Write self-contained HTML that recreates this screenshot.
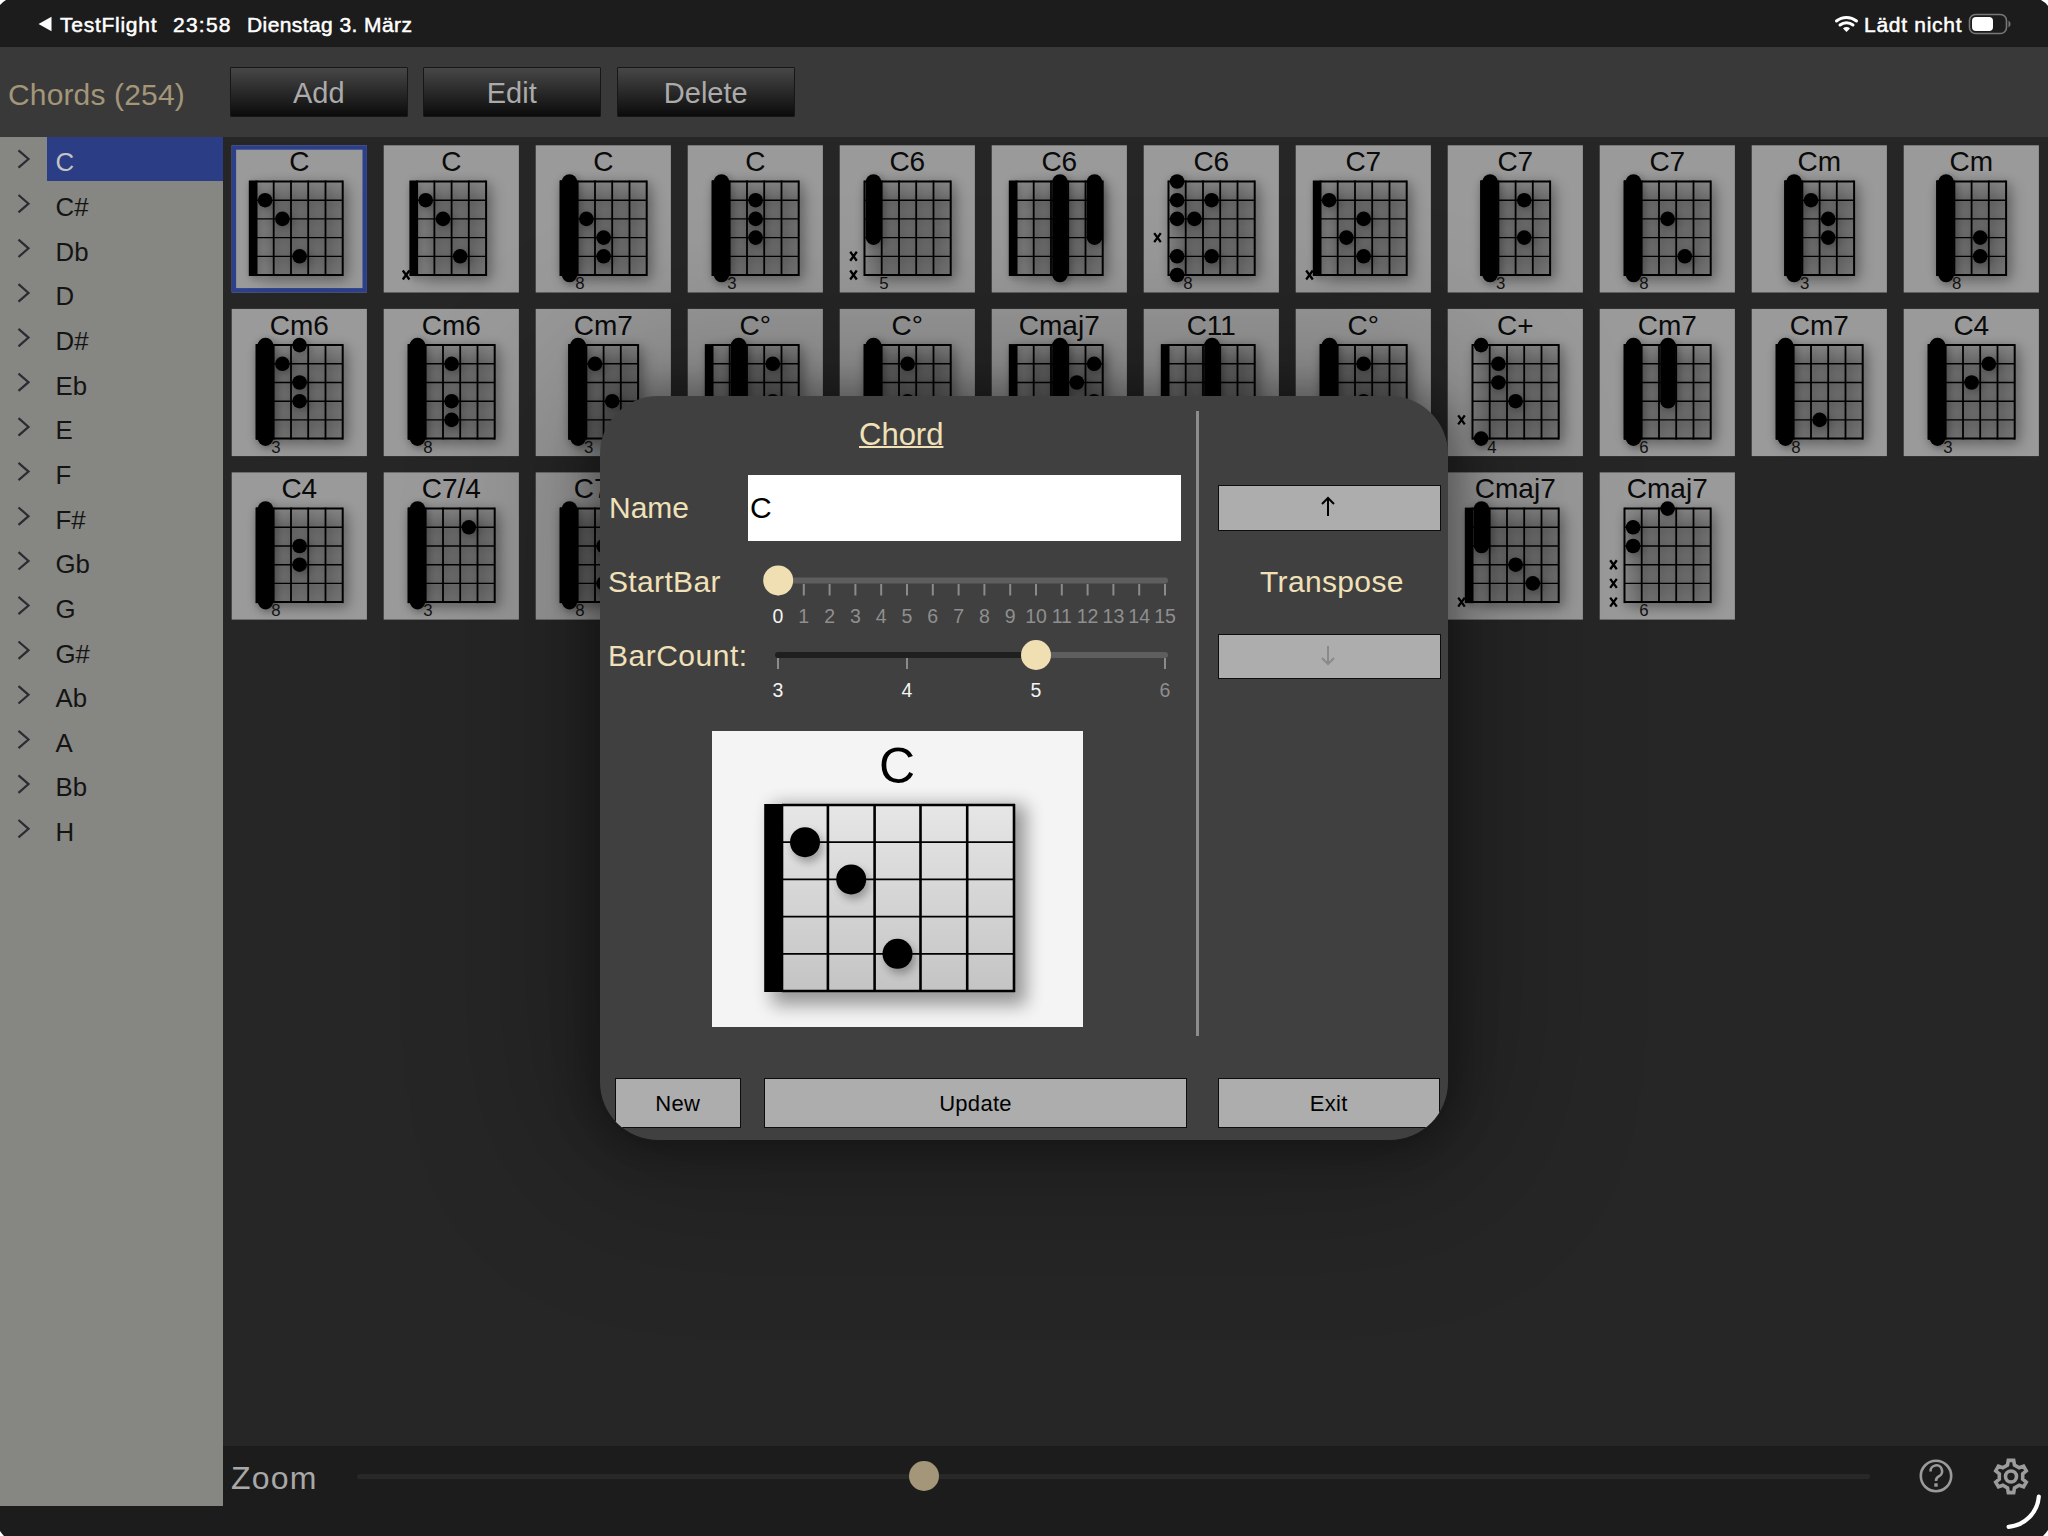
<!DOCTYPE html>
<html><head><meta charset="utf-8">
<style>
html,body{margin:0;padding:0;}
body{width:2048px;height:1536px;position:relative;overflow:hidden;background:#1c1c1c;font-family:"Liberation Sans",sans-serif;}
.a{position:absolute;}
.ct{font-size:28px;text-anchor:middle;fill:#0a0a0a;font-family:"Liberation Sans",sans-serif;}
.cf{font-size:16.8px;text-anchor:middle;fill:#111;font-family:"Liberation Sans",sans-serif;}
.cx{font-size:13px;font-weight:bold;text-anchor:middle;fill:#000;font-family:"Liberation Sans",sans-serif;}
.sn{font-size:25.8px;font-family:"Liberation Sans",sans-serif;}
.tb{position:absolute;top:66.7px;height:50.5px;width:177.5px;box-sizing:border-box;border:1px solid #171717;border-radius:1px;
  background:linear-gradient(#474747,#0b0b0b);color:#ababab;font-size:29px;line-height:50px;text-align:center;}
.lab{position:absolute;color:#f0e1b9;font-size:30px;line-height:1;white-space:nowrap;}
.btn{position:absolute;box-sizing:border-box;border:1.6px solid #0d0d0d;background:#adadad;color:#000;font-size:22px;text-align:center;}
</style></head>
<body>
<!-- status bar -->
<div class="a" style="left:0;top:0;width:2048px;height:47px;background:#1c1c1c;"></div>
<!-- toolbar -->
<div class="a" style="left:0;top:47px;width:2048px;height:90px;background:#393939;"></div>
<!-- content bg -->
<div class="a" style="left:223px;top:137px;width:1825px;height:1309px;background:#262626;"></div>
<!-- sidebar -->
<div class="a" style="left:0;top:137px;width:223px;height:1369px;background:#868682;"></div>
<div class="a" style="left:47.3px;top:136.5px;width:175.7px;height:44.9px;background:#2a3d85;"></div>
<!-- bottom bar -->
<div class="a" style="left:223px;top:1446px;width:1825px;height:60px;background:#1c1c1c;"></div>

<svg class="a" style="left:0;top:0" width="2048" height="1536" viewBox="0 0 2048 1536">
<defs>
<filter id="rsh" x="-40%" y="-40%" width="180%" height="180%"><feGaussianBlur stdDeviation="8"/></filter>
<filter id="gsh" x="-40%" y="-40%" width="180%" height="180%"><feGaussianBlur in="SourceAlpha" stdDeviation="4"/><feOffset dx="2" dy="2"/><feComponentTransfer><feFuncA type="linear" slope="0.35"/></feComponentTransfer><feMerge><feMergeNode/><feMergeNode in="SourceGraphic"/></feMerge></filter>
</defs>
<path d="M18.5 150.3 L28.5 159 L18.5 167.7" fill="none" stroke="#2b2b33" stroke-width="2.2" stroke-linejoin="miter"/>
<text x="55.5" y="171.3" class="sn" fill="#c4c4c4">C</text>
<path d="M18.5 195 L28.5 203.7 L18.5 212.4" fill="none" stroke="#2b2b33" stroke-width="2.2" stroke-linejoin="miter"/>
<text x="55.5" y="216" class="sn" fill="#141414">C#</text>
<path d="M18.5 239.6 L28.5 248.3 L18.5 257" fill="none" stroke="#2b2b33" stroke-width="2.2" stroke-linejoin="miter"/>
<text x="55.5" y="260.6" class="sn" fill="#141414">Db</text>
<path d="M18.5 284.2 L28.5 292.9 L18.5 301.6" fill="none" stroke="#2b2b33" stroke-width="2.2" stroke-linejoin="miter"/>
<text x="55.5" y="305.2" class="sn" fill="#141414">D</text>
<path d="M18.5 328.9 L28.5 337.6 L18.5 346.3" fill="none" stroke="#2b2b33" stroke-width="2.2" stroke-linejoin="miter"/>
<text x="55.5" y="349.9" class="sn" fill="#141414">D#</text>
<path d="M18.5 373.6 L28.5 382.2 L18.5 390.9" fill="none" stroke="#2b2b33" stroke-width="2.2" stroke-linejoin="miter"/>
<text x="55.5" y="394.6" class="sn" fill="#141414">Eb</text>
<path d="M18.5 418.2 L28.5 426.9 L18.5 435.6" fill="none" stroke="#2b2b33" stroke-width="2.2" stroke-linejoin="miter"/>
<text x="55.5" y="439.2" class="sn" fill="#141414">E</text>
<path d="M18.5 462.9 L28.5 471.6 L18.5 480.2" fill="none" stroke="#2b2b33" stroke-width="2.2" stroke-linejoin="miter"/>
<text x="55.5" y="483.9" class="sn" fill="#141414">F</text>
<path d="M18.5 507.5 L28.5 516.2 L18.5 524.9" fill="none" stroke="#2b2b33" stroke-width="2.2" stroke-linejoin="miter"/>
<text x="55.5" y="528.5" class="sn" fill="#141414">F#</text>
<path d="M18.5 552.1 L28.5 560.9 L18.5 569.5" fill="none" stroke="#2b2b33" stroke-width="2.2" stroke-linejoin="miter"/>
<text x="55.5" y="573.1" class="sn" fill="#141414">Gb</text>
<path d="M18.5 596.8 L28.5 605.5 L18.5 614.2" fill="none" stroke="#2b2b33" stroke-width="2.2" stroke-linejoin="miter"/>
<text x="55.5" y="617.8" class="sn" fill="#141414">G</text>
<path d="M18.5 641.5 L28.5 650.2 L18.5 658.9" fill="none" stroke="#2b2b33" stroke-width="2.2" stroke-linejoin="miter"/>
<text x="55.5" y="662.5" class="sn" fill="#141414">G#</text>
<path d="M18.5 686.1 L28.5 694.8 L18.5 703.5" fill="none" stroke="#2b2b33" stroke-width="2.2" stroke-linejoin="miter"/>
<text x="55.5" y="707.1" class="sn" fill="#141414">Ab</text>
<path d="M18.5 730.8 L28.5 739.5 L18.5 748.1" fill="none" stroke="#2b2b33" stroke-width="2.2" stroke-linejoin="miter"/>
<text x="55.5" y="751.8" class="sn" fill="#141414">A</text>
<path d="M18.5 775.4 L28.5 784.1 L18.5 792.8" fill="none" stroke="#2b2b33" stroke-width="2.2" stroke-linejoin="miter"/>
<text x="55.5" y="796.4" class="sn" fill="#141414">Bb</text>
<path d="M18.5 820 L28.5 828.8 L18.5 837.4" fill="none" stroke="#2b2b33" stroke-width="2.2" stroke-linejoin="miter"/>
<text x="55.5" y="841" class="sn" fill="#141414">H</text>
<g transform="translate(231.7,145.3)"><rect width="135.2" height="147.2" fill="#9a9a9a"/><rect x="2.2" y="2.2" width="130.8" height="142.8" fill="none" stroke="#2c3f8b" stroke-width="4.4"/><rect x="29.8" y="41.2" width="86.2" height="93.5" fill="#000" opacity="0.3" filter="url(#rsh)"/><text x="67.6" y="25.7" class="ct">C</text><g filter="url(#gsh)"><line x1="24.8" y1="36.2" x2="111" y2="36.2" stroke="#000" stroke-width="2"/><line x1="24.8" y1="54.9" x2="111" y2="54.9" stroke="#000" stroke-width="1.35"/><line x1="24.8" y1="73.6" x2="111" y2="73.6" stroke="#000" stroke-width="1.35"/><line x1="24.8" y1="92.3" x2="111" y2="92.3" stroke="#000" stroke-width="1.35"/><line x1="24.8" y1="111" x2="111" y2="111" stroke="#000" stroke-width="1.35"/><line x1="24.8" y1="129.7" x2="111" y2="129.7" stroke="#000" stroke-width="2"/><line x1="24.8" y1="35.2" x2="24.8" y2="130.7" stroke="#000" stroke-width="2"/><line x1="42" y1="35.2" x2="42" y2="130.7" stroke="#000" stroke-width="1.8"/><line x1="59.3" y1="35.2" x2="59.3" y2="130.7" stroke="#000" stroke-width="1.8"/><line x1="76.5" y1="35.2" x2="76.5" y2="130.7" stroke="#000" stroke-width="1.8"/><line x1="93.8" y1="35.2" x2="93.8" y2="130.7" stroke="#000" stroke-width="1.8"/><line x1="111" y1="35.2" x2="111" y2="130.7" stroke="#000" stroke-width="2"/><rect x="17.1" y="35.2" width="7.7" height="95.5" fill="#000"/><circle cx="33.4" cy="54.9" r="7.3" fill="#000"/><circle cx="50.7" cy="73.6" r="7.3" fill="#000"/><circle cx="67.9" cy="111" r="7.3" fill="#000"/></g></g>
<g transform="translate(383.7,145.3)"><rect width="135.2" height="147.2" fill="#9a9a9a"/><rect x="38.4" y="41.2" width="69" height="93.5" fill="#000" opacity="0.3" filter="url(#rsh)"/><text x="67.6" y="25.7" class="ct">C</text><g filter="url(#gsh)"><line x1="33.4" y1="36.2" x2="102.4" y2="36.2" stroke="#000" stroke-width="2"/><line x1="33.4" y1="54.9" x2="102.4" y2="54.9" stroke="#000" stroke-width="1.35"/><line x1="33.4" y1="73.6" x2="102.4" y2="73.6" stroke="#000" stroke-width="1.35"/><line x1="33.4" y1="92.3" x2="102.4" y2="92.3" stroke="#000" stroke-width="1.35"/><line x1="33.4" y1="111" x2="102.4" y2="111" stroke="#000" stroke-width="1.35"/><line x1="33.4" y1="129.7" x2="102.4" y2="129.7" stroke="#000" stroke-width="2"/><line x1="33.4" y1="35.2" x2="33.4" y2="130.7" stroke="#000" stroke-width="2"/><line x1="50.7" y1="35.2" x2="50.7" y2="130.7" stroke="#000" stroke-width="1.8"/><line x1="67.9" y1="35.2" x2="67.9" y2="130.7" stroke="#000" stroke-width="1.8"/><line x1="85.1" y1="35.2" x2="85.1" y2="130.7" stroke="#000" stroke-width="1.8"/><line x1="102.4" y1="35.2" x2="102.4" y2="130.7" stroke="#000" stroke-width="2"/><rect x="25.7" y="35.2" width="7.7" height="95.5" fill="#000"/><circle cx="42" cy="54.9" r="7.3" fill="#000"/><circle cx="59.3" cy="73.6" r="7.3" fill="#000"/><circle cx="76.5" cy="111" r="7.3" fill="#000"/></g><path d="M19.1 125.2 L25.7 134.2 M25.7 125.2 L19.1 134.2" stroke="#000" stroke-width="2.3"/></g>
<g transform="translate(535.7,145.3)"><rect width="135.2" height="147.2" fill="#9a9a9a"/><rect x="29.8" y="41.2" width="86.2" height="93.5" fill="#000" opacity="0.3" filter="url(#rsh)"/><text x="67.6" y="25.7" class="ct">C</text><g filter="url(#gsh)"><line x1="24.8" y1="36.2" x2="111" y2="36.2" stroke="#000" stroke-width="2"/><line x1="24.8" y1="54.9" x2="111" y2="54.9" stroke="#000" stroke-width="1.35"/><line x1="24.8" y1="73.6" x2="111" y2="73.6" stroke="#000" stroke-width="1.35"/><line x1="24.8" y1="92.3" x2="111" y2="92.3" stroke="#000" stroke-width="1.35"/><line x1="24.8" y1="111" x2="111" y2="111" stroke="#000" stroke-width="1.35"/><line x1="24.8" y1="129.7" x2="111" y2="129.7" stroke="#000" stroke-width="2"/><line x1="24.8" y1="35.2" x2="24.8" y2="130.7" stroke="#000" stroke-width="2"/><line x1="42" y1="35.2" x2="42" y2="130.7" stroke="#000" stroke-width="1.8"/><line x1="59.3" y1="35.2" x2="59.3" y2="130.7" stroke="#000" stroke-width="1.8"/><line x1="76.5" y1="35.2" x2="76.5" y2="130.7" stroke="#000" stroke-width="1.8"/><line x1="93.8" y1="35.2" x2="93.8" y2="130.7" stroke="#000" stroke-width="1.8"/><line x1="111" y1="35.2" x2="111" y2="130.7" stroke="#000" stroke-width="2"/><rect x="24.3" y="35.2" width="7" height="95.5" fill="#000"/><rect x="26" y="28.9" width="15.6" height="108.1" rx="7.8" fill="#000"/><circle cx="50.7" cy="73.6" r="7.3" fill="#000"/><circle cx="67.9" cy="92.3" r="7.3" fill="#000"/><circle cx="67.9" cy="111" r="7.3" fill="#000"/></g><text x="44.3" y="143.8" class="cf">8</text></g>
<g transform="translate(687.7,145.3)"><rect width="135.2" height="147.2" fill="#9a9a9a"/><rect x="29.8" y="41.2" width="86.2" height="93.5" fill="#000" opacity="0.3" filter="url(#rsh)"/><text x="67.6" y="25.7" class="ct">C</text><g filter="url(#gsh)"><line x1="24.8" y1="36.2" x2="111" y2="36.2" stroke="#000" stroke-width="2"/><line x1="24.8" y1="54.9" x2="111" y2="54.9" stroke="#000" stroke-width="1.35"/><line x1="24.8" y1="73.6" x2="111" y2="73.6" stroke="#000" stroke-width="1.35"/><line x1="24.8" y1="92.3" x2="111" y2="92.3" stroke="#000" stroke-width="1.35"/><line x1="24.8" y1="111" x2="111" y2="111" stroke="#000" stroke-width="1.35"/><line x1="24.8" y1="129.7" x2="111" y2="129.7" stroke="#000" stroke-width="2"/><line x1="24.8" y1="35.2" x2="24.8" y2="130.7" stroke="#000" stroke-width="2"/><line x1="42" y1="35.2" x2="42" y2="130.7" stroke="#000" stroke-width="1.8"/><line x1="59.3" y1="35.2" x2="59.3" y2="130.7" stroke="#000" stroke-width="1.8"/><line x1="76.5" y1="35.2" x2="76.5" y2="130.7" stroke="#000" stroke-width="1.8"/><line x1="93.8" y1="35.2" x2="93.8" y2="130.7" stroke="#000" stroke-width="1.8"/><line x1="111" y1="35.2" x2="111" y2="130.7" stroke="#000" stroke-width="2"/><rect x="24.3" y="35.2" width="7" height="95.5" fill="#000"/><rect x="26" y="28.9" width="15.6" height="108.1" rx="7.8" fill="#000"/><circle cx="67.9" cy="54.9" r="7.3" fill="#000"/><circle cx="67.9" cy="73.6" r="7.3" fill="#000"/><circle cx="67.9" cy="92.3" r="7.3" fill="#000"/></g><text x="44.3" y="143.8" class="cf">3</text></g>
<g transform="translate(839.7,145.3)"><rect width="135.2" height="147.2" fill="#9a9a9a"/><rect x="29.8" y="41.2" width="86.2" height="93.5" fill="#000" opacity="0.3" filter="url(#rsh)"/><text x="67.6" y="25.7" class="ct">C6</text><g filter="url(#gsh)"><line x1="24.8" y1="36.2" x2="111" y2="36.2" stroke="#000" stroke-width="2"/><line x1="24.8" y1="54.9" x2="111" y2="54.9" stroke="#000" stroke-width="1.35"/><line x1="24.8" y1="73.6" x2="111" y2="73.6" stroke="#000" stroke-width="1.35"/><line x1="24.8" y1="92.3" x2="111" y2="92.3" stroke="#000" stroke-width="1.35"/><line x1="24.8" y1="111" x2="111" y2="111" stroke="#000" stroke-width="1.35"/><line x1="24.8" y1="129.7" x2="111" y2="129.7" stroke="#000" stroke-width="2"/><line x1="24.8" y1="35.2" x2="24.8" y2="130.7" stroke="#000" stroke-width="2"/><line x1="42" y1="35.2" x2="42" y2="130.7" stroke="#000" stroke-width="1.8"/><line x1="59.3" y1="35.2" x2="59.3" y2="130.7" stroke="#000" stroke-width="1.8"/><line x1="76.5" y1="35.2" x2="76.5" y2="130.7" stroke="#000" stroke-width="1.8"/><line x1="93.8" y1="35.2" x2="93.8" y2="130.7" stroke="#000" stroke-width="1.8"/><line x1="111" y1="35.2" x2="111" y2="130.7" stroke="#000" stroke-width="2"/><rect x="26" y="28.9" width="15.6" height="70.7" rx="7.8" fill="#000"/></g><path d="M10.5 106.5 L17.1 115.5 M17.1 106.5 L10.5 115.5" stroke="#000" stroke-width="2.3"/><path d="M10.5 125.2 L17.1 134.2 M17.1 125.2 L10.5 134.2" stroke="#000" stroke-width="2.3"/><text x="44.3" y="143.8" class="cf">5</text></g>
<g transform="translate(991.7,145.3)"><rect width="135.2" height="147.2" fill="#9a9a9a"/><rect x="29.8" y="41.2" width="86.2" height="93.5" fill="#000" opacity="0.3" filter="url(#rsh)"/><text x="67.6" y="25.7" class="ct">C6</text><g filter="url(#gsh)"><line x1="24.8" y1="36.2" x2="111" y2="36.2" stroke="#000" stroke-width="2"/><line x1="24.8" y1="54.9" x2="111" y2="54.9" stroke="#000" stroke-width="1.35"/><line x1="24.8" y1="73.6" x2="111" y2="73.6" stroke="#000" stroke-width="1.35"/><line x1="24.8" y1="92.3" x2="111" y2="92.3" stroke="#000" stroke-width="1.35"/><line x1="24.8" y1="111" x2="111" y2="111" stroke="#000" stroke-width="1.35"/><line x1="24.8" y1="129.7" x2="111" y2="129.7" stroke="#000" stroke-width="2"/><line x1="24.8" y1="35.2" x2="24.8" y2="130.7" stroke="#000" stroke-width="2"/><line x1="42" y1="35.2" x2="42" y2="130.7" stroke="#000" stroke-width="1.8"/><line x1="59.3" y1="35.2" x2="59.3" y2="130.7" stroke="#000" stroke-width="1.8"/><line x1="76.5" y1="35.2" x2="76.5" y2="130.7" stroke="#000" stroke-width="1.8"/><line x1="93.8" y1="35.2" x2="93.8" y2="130.7" stroke="#000" stroke-width="1.8"/><line x1="111" y1="35.2" x2="111" y2="130.7" stroke="#000" stroke-width="2"/><rect x="17.1" y="35.2" width="7.7" height="95.5" fill="#000"/><rect x="60.5" y="28.9" width="15.6" height="108.1" rx="7.8" fill="#000"/><rect x="95" y="28.9" width="15.6" height="70.7" rx="7.8" fill="#000"/></g></g>
<g transform="translate(1143.7,145.3)"><rect width="135.2" height="147.2" fill="#9a9a9a"/><rect x="29.8" y="41.2" width="86.2" height="93.5" fill="#000" opacity="0.3" filter="url(#rsh)"/><text x="67.6" y="25.7" class="ct">C6</text><g filter="url(#gsh)"><line x1="24.8" y1="36.2" x2="111" y2="36.2" stroke="#000" stroke-width="2"/><line x1="24.8" y1="54.9" x2="111" y2="54.9" stroke="#000" stroke-width="1.35"/><line x1="24.8" y1="73.6" x2="111" y2="73.6" stroke="#000" stroke-width="1.35"/><line x1="24.8" y1="92.3" x2="111" y2="92.3" stroke="#000" stroke-width="1.35"/><line x1="24.8" y1="111" x2="111" y2="111" stroke="#000" stroke-width="1.35"/><line x1="24.8" y1="129.7" x2="111" y2="129.7" stroke="#000" stroke-width="2"/><line x1="24.8" y1="35.2" x2="24.8" y2="130.7" stroke="#000" stroke-width="2"/><line x1="42" y1="35.2" x2="42" y2="130.7" stroke="#000" stroke-width="1.8"/><line x1="59.3" y1="35.2" x2="59.3" y2="130.7" stroke="#000" stroke-width="1.8"/><line x1="76.5" y1="35.2" x2="76.5" y2="130.7" stroke="#000" stroke-width="1.8"/><line x1="93.8" y1="35.2" x2="93.8" y2="130.7" stroke="#000" stroke-width="1.8"/><line x1="111" y1="35.2" x2="111" y2="130.7" stroke="#000" stroke-width="2"/><circle cx="33.4" cy="36.2" r="7.3" fill="#000"/><circle cx="33.4" cy="54.9" r="7.3" fill="#000"/><circle cx="67.9" cy="54.9" r="7.3" fill="#000"/><circle cx="33.4" cy="73.6" r="7.3" fill="#000"/><circle cx="50.7" cy="73.6" r="7.3" fill="#000"/><circle cx="33.4" cy="111" r="7.3" fill="#000"/><circle cx="67.9" cy="111" r="7.3" fill="#000"/><circle cx="33.4" cy="129.7" r="7.3" fill="#000"/></g><path d="M10.5 87.8 L17.1 96.8 M17.1 87.8 L10.5 96.8" stroke="#000" stroke-width="2.3"/><text x="44.3" y="143.8" class="cf">8</text></g>
<g transform="translate(1295.7,145.3)"><rect width="135.2" height="147.2" fill="#9a9a9a"/><rect x="29.8" y="41.2" width="86.2" height="93.5" fill="#000" opacity="0.3" filter="url(#rsh)"/><text x="67.6" y="25.7" class="ct">C7</text><g filter="url(#gsh)"><line x1="24.8" y1="36.2" x2="111" y2="36.2" stroke="#000" stroke-width="2"/><line x1="24.8" y1="54.9" x2="111" y2="54.9" stroke="#000" stroke-width="1.35"/><line x1="24.8" y1="73.6" x2="111" y2="73.6" stroke="#000" stroke-width="1.35"/><line x1="24.8" y1="92.3" x2="111" y2="92.3" stroke="#000" stroke-width="1.35"/><line x1="24.8" y1="111" x2="111" y2="111" stroke="#000" stroke-width="1.35"/><line x1="24.8" y1="129.7" x2="111" y2="129.7" stroke="#000" stroke-width="2"/><line x1="24.8" y1="35.2" x2="24.8" y2="130.7" stroke="#000" stroke-width="2"/><line x1="42" y1="35.2" x2="42" y2="130.7" stroke="#000" stroke-width="1.8"/><line x1="59.3" y1="35.2" x2="59.3" y2="130.7" stroke="#000" stroke-width="1.8"/><line x1="76.5" y1="35.2" x2="76.5" y2="130.7" stroke="#000" stroke-width="1.8"/><line x1="93.8" y1="35.2" x2="93.8" y2="130.7" stroke="#000" stroke-width="1.8"/><line x1="111" y1="35.2" x2="111" y2="130.7" stroke="#000" stroke-width="2"/><rect x="17.1" y="35.2" width="7.7" height="95.5" fill="#000"/><circle cx="33.4" cy="54.9" r="7.3" fill="#000"/><circle cx="67.9" cy="73.6" r="7.3" fill="#000"/><circle cx="50.7" cy="92.3" r="7.3" fill="#000"/><circle cx="67.9" cy="111" r="7.3" fill="#000"/></g><path d="M10.5 125.2 L17.1 134.2 M17.1 125.2 L10.5 134.2" stroke="#000" stroke-width="2.3"/></g>
<g transform="translate(1447.7,145.3)"><rect width="135.2" height="147.2" fill="#9a9a9a"/><rect x="38.4" y="41.2" width="69" height="93.5" fill="#000" opacity="0.3" filter="url(#rsh)"/><text x="67.6" y="25.7" class="ct">C7</text><g filter="url(#gsh)"><line x1="33.4" y1="36.2" x2="102.4" y2="36.2" stroke="#000" stroke-width="2"/><line x1="33.4" y1="54.9" x2="102.4" y2="54.9" stroke="#000" stroke-width="1.35"/><line x1="33.4" y1="73.6" x2="102.4" y2="73.6" stroke="#000" stroke-width="1.35"/><line x1="33.4" y1="92.3" x2="102.4" y2="92.3" stroke="#000" stroke-width="1.35"/><line x1="33.4" y1="111" x2="102.4" y2="111" stroke="#000" stroke-width="1.35"/><line x1="33.4" y1="129.7" x2="102.4" y2="129.7" stroke="#000" stroke-width="2"/><line x1="33.4" y1="35.2" x2="33.4" y2="130.7" stroke="#000" stroke-width="2"/><line x1="50.7" y1="35.2" x2="50.7" y2="130.7" stroke="#000" stroke-width="1.8"/><line x1="67.9" y1="35.2" x2="67.9" y2="130.7" stroke="#000" stroke-width="1.8"/><line x1="85.1" y1="35.2" x2="85.1" y2="130.7" stroke="#000" stroke-width="1.8"/><line x1="102.4" y1="35.2" x2="102.4" y2="130.7" stroke="#000" stroke-width="2"/><rect x="32.9" y="35.2" width="7" height="95.5" fill="#000"/><rect x="34.6" y="28.9" width="15.6" height="108.1" rx="7.8" fill="#000"/><circle cx="76.5" cy="54.9" r="7.3" fill="#000"/><circle cx="76.5" cy="92.3" r="7.3" fill="#000"/></g><text x="52.9" y="143.8" class="cf">3</text></g>
<g transform="translate(1599.7,145.3)"><rect width="135.2" height="147.2" fill="#9a9a9a"/><rect x="29.8" y="41.2" width="86.2" height="93.5" fill="#000" opacity="0.3" filter="url(#rsh)"/><text x="67.6" y="25.7" class="ct">C7</text><g filter="url(#gsh)"><line x1="24.8" y1="36.2" x2="111" y2="36.2" stroke="#000" stroke-width="2"/><line x1="24.8" y1="54.9" x2="111" y2="54.9" stroke="#000" stroke-width="1.35"/><line x1="24.8" y1="73.6" x2="111" y2="73.6" stroke="#000" stroke-width="1.35"/><line x1="24.8" y1="92.3" x2="111" y2="92.3" stroke="#000" stroke-width="1.35"/><line x1="24.8" y1="111" x2="111" y2="111" stroke="#000" stroke-width="1.35"/><line x1="24.8" y1="129.7" x2="111" y2="129.7" stroke="#000" stroke-width="2"/><line x1="24.8" y1="35.2" x2="24.8" y2="130.7" stroke="#000" stroke-width="2"/><line x1="42" y1="35.2" x2="42" y2="130.7" stroke="#000" stroke-width="1.8"/><line x1="59.3" y1="35.2" x2="59.3" y2="130.7" stroke="#000" stroke-width="1.8"/><line x1="76.5" y1="35.2" x2="76.5" y2="130.7" stroke="#000" stroke-width="1.8"/><line x1="93.8" y1="35.2" x2="93.8" y2="130.7" stroke="#000" stroke-width="1.8"/><line x1="111" y1="35.2" x2="111" y2="130.7" stroke="#000" stroke-width="2"/><rect x="24.3" y="35.2" width="7" height="95.5" fill="#000"/><rect x="26" y="28.9" width="15.6" height="108.1" rx="7.8" fill="#000"/><circle cx="67.9" cy="73.6" r="7.3" fill="#000"/><circle cx="85.1" cy="111" r="7.3" fill="#000"/></g><text x="44.3" y="143.8" class="cf">8</text></g>
<g transform="translate(1751.7,145.3)"><rect width="135.2" height="147.2" fill="#9a9a9a"/><rect x="38.4" y="41.2" width="69" height="93.5" fill="#000" opacity="0.3" filter="url(#rsh)"/><text x="67.6" y="25.7" class="ct">Cm</text><g filter="url(#gsh)"><line x1="33.4" y1="36.2" x2="102.4" y2="36.2" stroke="#000" stroke-width="2"/><line x1="33.4" y1="54.9" x2="102.4" y2="54.9" stroke="#000" stroke-width="1.35"/><line x1="33.4" y1="73.6" x2="102.4" y2="73.6" stroke="#000" stroke-width="1.35"/><line x1="33.4" y1="92.3" x2="102.4" y2="92.3" stroke="#000" stroke-width="1.35"/><line x1="33.4" y1="111" x2="102.4" y2="111" stroke="#000" stroke-width="1.35"/><line x1="33.4" y1="129.7" x2="102.4" y2="129.7" stroke="#000" stroke-width="2"/><line x1="33.4" y1="35.2" x2="33.4" y2="130.7" stroke="#000" stroke-width="2"/><line x1="50.7" y1="35.2" x2="50.7" y2="130.7" stroke="#000" stroke-width="1.8"/><line x1="67.9" y1="35.2" x2="67.9" y2="130.7" stroke="#000" stroke-width="1.8"/><line x1="85.1" y1="35.2" x2="85.1" y2="130.7" stroke="#000" stroke-width="1.8"/><line x1="102.4" y1="35.2" x2="102.4" y2="130.7" stroke="#000" stroke-width="2"/><rect x="32.9" y="35.2" width="7" height="95.5" fill="#000"/><rect x="34.6" y="28.9" width="15.6" height="108.1" rx="7.8" fill="#000"/><circle cx="59.3" cy="54.9" r="7.3" fill="#000"/><circle cx="76.5" cy="73.6" r="7.3" fill="#000"/><circle cx="76.5" cy="92.3" r="7.3" fill="#000"/></g><text x="52.9" y="143.8" class="cf">3</text></g>
<g transform="translate(1903.7,145.3)"><rect width="135.2" height="147.2" fill="#9a9a9a"/><rect x="38.4" y="41.2" width="69" height="93.5" fill="#000" opacity="0.3" filter="url(#rsh)"/><text x="67.6" y="25.7" class="ct">Cm</text><g filter="url(#gsh)"><line x1="33.4" y1="36.2" x2="102.4" y2="36.2" stroke="#000" stroke-width="2"/><line x1="33.4" y1="54.9" x2="102.4" y2="54.9" stroke="#000" stroke-width="1.35"/><line x1="33.4" y1="73.6" x2="102.4" y2="73.6" stroke="#000" stroke-width="1.35"/><line x1="33.4" y1="92.3" x2="102.4" y2="92.3" stroke="#000" stroke-width="1.35"/><line x1="33.4" y1="111" x2="102.4" y2="111" stroke="#000" stroke-width="1.35"/><line x1="33.4" y1="129.7" x2="102.4" y2="129.7" stroke="#000" stroke-width="2"/><line x1="33.4" y1="35.2" x2="33.4" y2="130.7" stroke="#000" stroke-width="2"/><line x1="50.7" y1="35.2" x2="50.7" y2="130.7" stroke="#000" stroke-width="1.8"/><line x1="67.9" y1="35.2" x2="67.9" y2="130.7" stroke="#000" stroke-width="1.8"/><line x1="85.1" y1="35.2" x2="85.1" y2="130.7" stroke="#000" stroke-width="1.8"/><line x1="102.4" y1="35.2" x2="102.4" y2="130.7" stroke="#000" stroke-width="2"/><rect x="32.9" y="35.2" width="7" height="95.5" fill="#000"/><rect x="34.6" y="28.9" width="15.6" height="108.1" rx="7.8" fill="#000"/><circle cx="76.5" cy="92.3" r="7.3" fill="#000"/><circle cx="76.5" cy="111" r="7.3" fill="#000"/></g><text x="52.9" y="143.8" class="cf">8</text></g>
<g transform="translate(231.7,308.9)"><rect width="135.2" height="147.2" fill="#9a9a9a"/><rect x="29.8" y="41.2" width="86.2" height="93.5" fill="#000" opacity="0.3" filter="url(#rsh)"/><text x="67.6" y="25.7" class="ct">Cm6</text><g filter="url(#gsh)"><line x1="24.8" y1="36.2" x2="111" y2="36.2" stroke="#000" stroke-width="2"/><line x1="24.8" y1="54.9" x2="111" y2="54.9" stroke="#000" stroke-width="1.35"/><line x1="24.8" y1="73.6" x2="111" y2="73.6" stroke="#000" stroke-width="1.35"/><line x1="24.8" y1="92.3" x2="111" y2="92.3" stroke="#000" stroke-width="1.35"/><line x1="24.8" y1="111" x2="111" y2="111" stroke="#000" stroke-width="1.35"/><line x1="24.8" y1="129.7" x2="111" y2="129.7" stroke="#000" stroke-width="2"/><line x1="24.8" y1="35.2" x2="24.8" y2="130.7" stroke="#000" stroke-width="2"/><line x1="42" y1="35.2" x2="42" y2="130.7" stroke="#000" stroke-width="1.8"/><line x1="59.3" y1="35.2" x2="59.3" y2="130.7" stroke="#000" stroke-width="1.8"/><line x1="76.5" y1="35.2" x2="76.5" y2="130.7" stroke="#000" stroke-width="1.8"/><line x1="93.8" y1="35.2" x2="93.8" y2="130.7" stroke="#000" stroke-width="1.8"/><line x1="111" y1="35.2" x2="111" y2="130.7" stroke="#000" stroke-width="2"/><rect x="24.3" y="35.2" width="7" height="95.5" fill="#000"/><rect x="26" y="28.9" width="15.6" height="108.1" rx="7.8" fill="#000"/><circle cx="67.9" cy="36.2" r="7.3" fill="#000"/><circle cx="50.7" cy="54.9" r="7.3" fill="#000"/><circle cx="67.9" cy="73.6" r="7.3" fill="#000"/><circle cx="67.9" cy="92.3" r="7.3" fill="#000"/></g><text x="44.3" y="143.8" class="cf">3</text></g>
<g transform="translate(383.7,308.9)"><rect width="135.2" height="147.2" fill="#9a9a9a"/><rect x="29.8" y="41.2" width="86.2" height="93.5" fill="#000" opacity="0.3" filter="url(#rsh)"/><text x="67.6" y="25.7" class="ct">Cm6</text><g filter="url(#gsh)"><line x1="24.8" y1="36.2" x2="111" y2="36.2" stroke="#000" stroke-width="2"/><line x1="24.8" y1="54.9" x2="111" y2="54.9" stroke="#000" stroke-width="1.35"/><line x1="24.8" y1="73.6" x2="111" y2="73.6" stroke="#000" stroke-width="1.35"/><line x1="24.8" y1="92.3" x2="111" y2="92.3" stroke="#000" stroke-width="1.35"/><line x1="24.8" y1="111" x2="111" y2="111" stroke="#000" stroke-width="1.35"/><line x1="24.8" y1="129.7" x2="111" y2="129.7" stroke="#000" stroke-width="2"/><line x1="24.8" y1="35.2" x2="24.8" y2="130.7" stroke="#000" stroke-width="2"/><line x1="42" y1="35.2" x2="42" y2="130.7" stroke="#000" stroke-width="1.8"/><line x1="59.3" y1="35.2" x2="59.3" y2="130.7" stroke="#000" stroke-width="1.8"/><line x1="76.5" y1="35.2" x2="76.5" y2="130.7" stroke="#000" stroke-width="1.8"/><line x1="93.8" y1="35.2" x2="93.8" y2="130.7" stroke="#000" stroke-width="1.8"/><line x1="111" y1="35.2" x2="111" y2="130.7" stroke="#000" stroke-width="2"/><rect x="24.3" y="35.2" width="7" height="95.5" fill="#000"/><rect x="26" y="28.9" width="15.6" height="108.1" rx="7.8" fill="#000"/><circle cx="67.9" cy="54.9" r="7.3" fill="#000"/><circle cx="67.9" cy="92.3" r="7.3" fill="#000"/><circle cx="67.9" cy="111" r="7.3" fill="#000"/></g><text x="44.3" y="143.8" class="cf">8</text></g>
<g transform="translate(535.7,308.9)"><rect width="135.2" height="147.2" fill="#9a9a9a"/><rect x="38.4" y="41.2" width="69" height="93.5" fill="#000" opacity="0.3" filter="url(#rsh)"/><text x="67.6" y="25.7" class="ct">Cm7</text><g filter="url(#gsh)"><line x1="33.4" y1="36.2" x2="102.4" y2="36.2" stroke="#000" stroke-width="2"/><line x1="33.4" y1="54.9" x2="102.4" y2="54.9" stroke="#000" stroke-width="1.35"/><line x1="33.4" y1="73.6" x2="102.4" y2="73.6" stroke="#000" stroke-width="1.35"/><line x1="33.4" y1="92.3" x2="102.4" y2="92.3" stroke="#000" stroke-width="1.35"/><line x1="33.4" y1="111" x2="102.4" y2="111" stroke="#000" stroke-width="1.35"/><line x1="33.4" y1="129.7" x2="102.4" y2="129.7" stroke="#000" stroke-width="2"/><line x1="33.4" y1="35.2" x2="33.4" y2="130.7" stroke="#000" stroke-width="2"/><line x1="50.7" y1="35.2" x2="50.7" y2="130.7" stroke="#000" stroke-width="1.8"/><line x1="67.9" y1="35.2" x2="67.9" y2="130.7" stroke="#000" stroke-width="1.8"/><line x1="85.1" y1="35.2" x2="85.1" y2="130.7" stroke="#000" stroke-width="1.8"/><line x1="102.4" y1="35.2" x2="102.4" y2="130.7" stroke="#000" stroke-width="2"/><rect x="32.9" y="35.2" width="7" height="95.5" fill="#000"/><rect x="34.6" y="28.9" width="15.6" height="108.1" rx="7.8" fill="#000"/><circle cx="59.3" cy="54.9" r="7.3" fill="#000"/><circle cx="76.5" cy="92.3" r="7.3" fill="#000"/></g><text x="52.9" y="143.8" class="cf">3</text></g>
<g transform="translate(687.7,308.9)"><rect width="135.2" height="147.2" fill="#9a9a9a"/><rect x="29.8" y="41.2" width="86.2" height="93.5" fill="#000" opacity="0.3" filter="url(#rsh)"/><text x="67.6" y="25.7" class="ct">C°</text><g filter="url(#gsh)"><line x1="24.8" y1="36.2" x2="111" y2="36.2" stroke="#000" stroke-width="2"/><line x1="24.8" y1="54.9" x2="111" y2="54.9" stroke="#000" stroke-width="1.35"/><line x1="24.8" y1="73.6" x2="111" y2="73.6" stroke="#000" stroke-width="1.35"/><line x1="24.8" y1="92.3" x2="111" y2="92.3" stroke="#000" stroke-width="1.35"/><line x1="24.8" y1="111" x2="111" y2="111" stroke="#000" stroke-width="1.35"/><line x1="24.8" y1="129.7" x2="111" y2="129.7" stroke="#000" stroke-width="2"/><line x1="24.8" y1="35.2" x2="24.8" y2="130.7" stroke="#000" stroke-width="2"/><line x1="42" y1="35.2" x2="42" y2="130.7" stroke="#000" stroke-width="1.8"/><line x1="59.3" y1="35.2" x2="59.3" y2="130.7" stroke="#000" stroke-width="1.8"/><line x1="76.5" y1="35.2" x2="76.5" y2="130.7" stroke="#000" stroke-width="1.8"/><line x1="93.8" y1="35.2" x2="93.8" y2="130.7" stroke="#000" stroke-width="1.8"/><line x1="111" y1="35.2" x2="111" y2="130.7" stroke="#000" stroke-width="2"/><rect x="17.1" y="35.2" width="7.7" height="95.5" fill="#000"/><rect x="43.2" y="28.9" width="15.6" height="108.1" rx="7.8" fill="#000"/><circle cx="85.1" cy="54.9" r="7.3" fill="#000"/><circle cx="85.1" cy="92.3" r="7.3" fill="#000"/></g></g>
<g transform="translate(839.7,308.9)"><rect width="135.2" height="147.2" fill="#9a9a9a"/><rect x="29.8" y="41.2" width="86.2" height="93.5" fill="#000" opacity="0.3" filter="url(#rsh)"/><text x="67.6" y="25.7" class="ct">C°</text><g filter="url(#gsh)"><line x1="24.8" y1="36.2" x2="111" y2="36.2" stroke="#000" stroke-width="2"/><line x1="24.8" y1="54.9" x2="111" y2="54.9" stroke="#000" stroke-width="1.35"/><line x1="24.8" y1="73.6" x2="111" y2="73.6" stroke="#000" stroke-width="1.35"/><line x1="24.8" y1="92.3" x2="111" y2="92.3" stroke="#000" stroke-width="1.35"/><line x1="24.8" y1="111" x2="111" y2="111" stroke="#000" stroke-width="1.35"/><line x1="24.8" y1="129.7" x2="111" y2="129.7" stroke="#000" stroke-width="2"/><line x1="24.8" y1="35.2" x2="24.8" y2="130.7" stroke="#000" stroke-width="2"/><line x1="42" y1="35.2" x2="42" y2="130.7" stroke="#000" stroke-width="1.8"/><line x1="59.3" y1="35.2" x2="59.3" y2="130.7" stroke="#000" stroke-width="1.8"/><line x1="76.5" y1="35.2" x2="76.5" y2="130.7" stroke="#000" stroke-width="1.8"/><line x1="93.8" y1="35.2" x2="93.8" y2="130.7" stroke="#000" stroke-width="1.8"/><line x1="111" y1="35.2" x2="111" y2="130.7" stroke="#000" stroke-width="2"/><rect x="24.3" y="35.2" width="7" height="95.5" fill="#000"/><rect x="26" y="28.9" width="15.6" height="108.1" rx="7.8" fill="#000"/><circle cx="67.9" cy="54.9" r="7.3" fill="#000"/><circle cx="67.9" cy="92.3" r="7.3" fill="#000"/></g><text x="44.3" y="143.8" class="cf">3</text></g>
<g transform="translate(991.7,308.9)"><rect width="135.2" height="147.2" fill="#9a9a9a"/><rect x="29.8" y="41.2" width="86.2" height="93.5" fill="#000" opacity="0.3" filter="url(#rsh)"/><text x="67.6" y="25.7" class="ct">Cmaj7</text><g filter="url(#gsh)"><line x1="24.8" y1="36.2" x2="111" y2="36.2" stroke="#000" stroke-width="2"/><line x1="24.8" y1="54.9" x2="111" y2="54.9" stroke="#000" stroke-width="1.35"/><line x1="24.8" y1="73.6" x2="111" y2="73.6" stroke="#000" stroke-width="1.35"/><line x1="24.8" y1="92.3" x2="111" y2="92.3" stroke="#000" stroke-width="1.35"/><line x1="24.8" y1="111" x2="111" y2="111" stroke="#000" stroke-width="1.35"/><line x1="24.8" y1="129.7" x2="111" y2="129.7" stroke="#000" stroke-width="2"/><line x1="24.8" y1="35.2" x2="24.8" y2="130.7" stroke="#000" stroke-width="2"/><line x1="42" y1="35.2" x2="42" y2="130.7" stroke="#000" stroke-width="1.8"/><line x1="59.3" y1="35.2" x2="59.3" y2="130.7" stroke="#000" stroke-width="1.8"/><line x1="76.5" y1="35.2" x2="76.5" y2="130.7" stroke="#000" stroke-width="1.8"/><line x1="93.8" y1="35.2" x2="93.8" y2="130.7" stroke="#000" stroke-width="1.8"/><line x1="111" y1="35.2" x2="111" y2="130.7" stroke="#000" stroke-width="2"/><rect x="17.1" y="35.2" width="7.7" height="95.5" fill="#000"/><rect x="60.5" y="28.9" width="15.6" height="108.1" rx="7.8" fill="#000"/><circle cx="102.4" cy="54.9" r="7.3" fill="#000"/><circle cx="85.1" cy="73.6" r="7.3" fill="#000"/><circle cx="102.4" cy="92.3" r="7.3" fill="#000"/></g></g>
<g transform="translate(1143.7,308.9)"><rect width="135.2" height="147.2" fill="#9a9a9a"/><rect x="29.8" y="41.2" width="86.2" height="93.5" fill="#000" opacity="0.3" filter="url(#rsh)"/><text x="67.6" y="25.7" class="ct">C11</text><g filter="url(#gsh)"><line x1="24.8" y1="36.2" x2="111" y2="36.2" stroke="#000" stroke-width="2"/><line x1="24.8" y1="54.9" x2="111" y2="54.9" stroke="#000" stroke-width="1.35"/><line x1="24.8" y1="73.6" x2="111" y2="73.6" stroke="#000" stroke-width="1.35"/><line x1="24.8" y1="92.3" x2="111" y2="92.3" stroke="#000" stroke-width="1.35"/><line x1="24.8" y1="111" x2="111" y2="111" stroke="#000" stroke-width="1.35"/><line x1="24.8" y1="129.7" x2="111" y2="129.7" stroke="#000" stroke-width="2"/><line x1="24.8" y1="35.2" x2="24.8" y2="130.7" stroke="#000" stroke-width="2"/><line x1="42" y1="35.2" x2="42" y2="130.7" stroke="#000" stroke-width="1.8"/><line x1="59.3" y1="35.2" x2="59.3" y2="130.7" stroke="#000" stroke-width="1.8"/><line x1="76.5" y1="35.2" x2="76.5" y2="130.7" stroke="#000" stroke-width="1.8"/><line x1="93.8" y1="35.2" x2="93.8" y2="130.7" stroke="#000" stroke-width="1.8"/><line x1="111" y1="35.2" x2="111" y2="130.7" stroke="#000" stroke-width="2"/><rect x="17.1" y="35.2" width="7.7" height="95.5" fill="#000"/><rect x="60.5" y="28.9" width="15.6" height="108.1" rx="7.8" fill="#000"/></g></g>
<g transform="translate(1295.7,308.9)"><rect width="135.2" height="147.2" fill="#9a9a9a"/><rect x="29.8" y="41.2" width="86.2" height="93.5" fill="#000" opacity="0.3" filter="url(#rsh)"/><text x="67.6" y="25.7" class="ct">C°</text><g filter="url(#gsh)"><line x1="24.8" y1="36.2" x2="111" y2="36.2" stroke="#000" stroke-width="2"/><line x1="24.8" y1="54.9" x2="111" y2="54.9" stroke="#000" stroke-width="1.35"/><line x1="24.8" y1="73.6" x2="111" y2="73.6" stroke="#000" stroke-width="1.35"/><line x1="24.8" y1="92.3" x2="111" y2="92.3" stroke="#000" stroke-width="1.35"/><line x1="24.8" y1="111" x2="111" y2="111" stroke="#000" stroke-width="1.35"/><line x1="24.8" y1="129.7" x2="111" y2="129.7" stroke="#000" stroke-width="2"/><line x1="24.8" y1="35.2" x2="24.8" y2="130.7" stroke="#000" stroke-width="2"/><line x1="42" y1="35.2" x2="42" y2="130.7" stroke="#000" stroke-width="1.8"/><line x1="59.3" y1="35.2" x2="59.3" y2="130.7" stroke="#000" stroke-width="1.8"/><line x1="76.5" y1="35.2" x2="76.5" y2="130.7" stroke="#000" stroke-width="1.8"/><line x1="93.8" y1="35.2" x2="93.8" y2="130.7" stroke="#000" stroke-width="1.8"/><line x1="111" y1="35.2" x2="111" y2="130.7" stroke="#000" stroke-width="2"/><rect x="24.3" y="35.2" width="7" height="95.5" fill="#000"/><rect x="26" y="28.9" width="15.6" height="108.1" rx="7.8" fill="#000"/><circle cx="67.9" cy="54.9" r="7.3" fill="#000"/><circle cx="67.9" cy="92.3" r="7.3" fill="#000"/></g><text x="44.3" y="143.8" class="cf">3</text></g>
<g transform="translate(1447.7,308.9)"><rect width="135.2" height="147.2" fill="#9a9a9a"/><rect x="29.8" y="41.2" width="86.2" height="93.5" fill="#000" opacity="0.3" filter="url(#rsh)"/><text x="67.6" y="25.7" class="ct">C+</text><g filter="url(#gsh)"><line x1="24.8" y1="36.2" x2="111" y2="36.2" stroke="#000" stroke-width="2"/><line x1="24.8" y1="54.9" x2="111" y2="54.9" stroke="#000" stroke-width="1.35"/><line x1="24.8" y1="73.6" x2="111" y2="73.6" stroke="#000" stroke-width="1.35"/><line x1="24.8" y1="92.3" x2="111" y2="92.3" stroke="#000" stroke-width="1.35"/><line x1="24.8" y1="111" x2="111" y2="111" stroke="#000" stroke-width="1.35"/><line x1="24.8" y1="129.7" x2="111" y2="129.7" stroke="#000" stroke-width="2"/><line x1="24.8" y1="35.2" x2="24.8" y2="130.7" stroke="#000" stroke-width="2"/><line x1="42" y1="35.2" x2="42" y2="130.7" stroke="#000" stroke-width="1.8"/><line x1="59.3" y1="35.2" x2="59.3" y2="130.7" stroke="#000" stroke-width="1.8"/><line x1="76.5" y1="35.2" x2="76.5" y2="130.7" stroke="#000" stroke-width="1.8"/><line x1="93.8" y1="35.2" x2="93.8" y2="130.7" stroke="#000" stroke-width="1.8"/><line x1="111" y1="35.2" x2="111" y2="130.7" stroke="#000" stroke-width="2"/><circle cx="33.4" cy="36.2" r="7.3" fill="#000"/><circle cx="50.7" cy="54.9" r="7.3" fill="#000"/><circle cx="50.7" cy="73.6" r="7.3" fill="#000"/><circle cx="67.9" cy="92.3" r="7.3" fill="#000"/><circle cx="33.4" cy="129.7" r="7.3" fill="#000"/></g><path d="M10.5 106.5 L17.1 115.5 M17.1 106.5 L10.5 115.5" stroke="#000" stroke-width="2.3"/><text x="44.3" y="143.8" class="cf">4</text></g>
<g transform="translate(1599.7,308.9)"><rect width="135.2" height="147.2" fill="#9a9a9a"/><rect x="29.8" y="41.2" width="86.2" height="93.5" fill="#000" opacity="0.3" filter="url(#rsh)"/><text x="67.6" y="25.7" class="ct">Cm7</text><g filter="url(#gsh)"><line x1="24.8" y1="36.2" x2="111" y2="36.2" stroke="#000" stroke-width="2"/><line x1="24.8" y1="54.9" x2="111" y2="54.9" stroke="#000" stroke-width="1.35"/><line x1="24.8" y1="73.6" x2="111" y2="73.6" stroke="#000" stroke-width="1.35"/><line x1="24.8" y1="92.3" x2="111" y2="92.3" stroke="#000" stroke-width="1.35"/><line x1="24.8" y1="111" x2="111" y2="111" stroke="#000" stroke-width="1.35"/><line x1="24.8" y1="129.7" x2="111" y2="129.7" stroke="#000" stroke-width="2"/><line x1="24.8" y1="35.2" x2="24.8" y2="130.7" stroke="#000" stroke-width="2"/><line x1="42" y1="35.2" x2="42" y2="130.7" stroke="#000" stroke-width="1.8"/><line x1="59.3" y1="35.2" x2="59.3" y2="130.7" stroke="#000" stroke-width="1.8"/><line x1="76.5" y1="35.2" x2="76.5" y2="130.7" stroke="#000" stroke-width="1.8"/><line x1="93.8" y1="35.2" x2="93.8" y2="130.7" stroke="#000" stroke-width="1.8"/><line x1="111" y1="35.2" x2="111" y2="130.7" stroke="#000" stroke-width="2"/><rect x="24.3" y="35.2" width="7" height="95.5" fill="#000"/><rect x="26" y="28.9" width="15.6" height="108.1" rx="7.8" fill="#000"/><rect x="60.5" y="28.9" width="15.6" height="70.7" rx="7.8" fill="#000"/></g><text x="44.3" y="143.8" class="cf">6</text></g>
<g transform="translate(1751.7,308.9)"><rect width="135.2" height="147.2" fill="#9a9a9a"/><rect x="29.8" y="41.2" width="86.2" height="93.5" fill="#000" opacity="0.3" filter="url(#rsh)"/><text x="67.6" y="25.7" class="ct">Cm7</text><g filter="url(#gsh)"><line x1="24.8" y1="36.2" x2="111" y2="36.2" stroke="#000" stroke-width="2"/><line x1="24.8" y1="54.9" x2="111" y2="54.9" stroke="#000" stroke-width="1.35"/><line x1="24.8" y1="73.6" x2="111" y2="73.6" stroke="#000" stroke-width="1.35"/><line x1="24.8" y1="92.3" x2="111" y2="92.3" stroke="#000" stroke-width="1.35"/><line x1="24.8" y1="111" x2="111" y2="111" stroke="#000" stroke-width="1.35"/><line x1="24.8" y1="129.7" x2="111" y2="129.7" stroke="#000" stroke-width="2"/><line x1="24.8" y1="35.2" x2="24.8" y2="130.7" stroke="#000" stroke-width="2"/><line x1="42" y1="35.2" x2="42" y2="130.7" stroke="#000" stroke-width="1.8"/><line x1="59.3" y1="35.2" x2="59.3" y2="130.7" stroke="#000" stroke-width="1.8"/><line x1="76.5" y1="35.2" x2="76.5" y2="130.7" stroke="#000" stroke-width="1.8"/><line x1="93.8" y1="35.2" x2="93.8" y2="130.7" stroke="#000" stroke-width="1.8"/><line x1="111" y1="35.2" x2="111" y2="130.7" stroke="#000" stroke-width="2"/><rect x="24.3" y="35.2" width="7" height="95.5" fill="#000"/><rect x="26" y="28.9" width="15.6" height="108.1" rx="7.8" fill="#000"/><circle cx="67.9" cy="111" r="7.3" fill="#000"/></g><text x="44.3" y="143.8" class="cf">8</text></g>
<g transform="translate(1903.7,308.9)"><rect width="135.2" height="147.2" fill="#9a9a9a"/><rect x="29.8" y="41.2" width="86.2" height="93.5" fill="#000" opacity="0.3" filter="url(#rsh)"/><text x="67.6" y="25.7" class="ct">C4</text><g filter="url(#gsh)"><line x1="24.8" y1="36.2" x2="111" y2="36.2" stroke="#000" stroke-width="2"/><line x1="24.8" y1="54.9" x2="111" y2="54.9" stroke="#000" stroke-width="1.35"/><line x1="24.8" y1="73.6" x2="111" y2="73.6" stroke="#000" stroke-width="1.35"/><line x1="24.8" y1="92.3" x2="111" y2="92.3" stroke="#000" stroke-width="1.35"/><line x1="24.8" y1="111" x2="111" y2="111" stroke="#000" stroke-width="1.35"/><line x1="24.8" y1="129.7" x2="111" y2="129.7" stroke="#000" stroke-width="2"/><line x1="24.8" y1="35.2" x2="24.8" y2="130.7" stroke="#000" stroke-width="2"/><line x1="42" y1="35.2" x2="42" y2="130.7" stroke="#000" stroke-width="1.8"/><line x1="59.3" y1="35.2" x2="59.3" y2="130.7" stroke="#000" stroke-width="1.8"/><line x1="76.5" y1="35.2" x2="76.5" y2="130.7" stroke="#000" stroke-width="1.8"/><line x1="93.8" y1="35.2" x2="93.8" y2="130.7" stroke="#000" stroke-width="1.8"/><line x1="111" y1="35.2" x2="111" y2="130.7" stroke="#000" stroke-width="2"/><rect x="24.3" y="35.2" width="7" height="95.5" fill="#000"/><rect x="26" y="28.9" width="15.6" height="108.1" rx="7.8" fill="#000"/><circle cx="85.1" cy="54.9" r="7.3" fill="#000"/><circle cx="67.9" cy="73.6" r="7.3" fill="#000"/></g><text x="44.3" y="143.8" class="cf">3</text></g>
<g transform="translate(231.7,472.4)"><rect width="135.2" height="147.2" fill="#9a9a9a"/><rect x="29.8" y="41.2" width="86.2" height="93.5" fill="#000" opacity="0.3" filter="url(#rsh)"/><text x="67.6" y="25.7" class="ct">C4</text><g filter="url(#gsh)"><line x1="24.8" y1="36.2" x2="111" y2="36.2" stroke="#000" stroke-width="2"/><line x1="24.8" y1="54.9" x2="111" y2="54.9" stroke="#000" stroke-width="1.35"/><line x1="24.8" y1="73.6" x2="111" y2="73.6" stroke="#000" stroke-width="1.35"/><line x1="24.8" y1="92.3" x2="111" y2="92.3" stroke="#000" stroke-width="1.35"/><line x1="24.8" y1="111" x2="111" y2="111" stroke="#000" stroke-width="1.35"/><line x1="24.8" y1="129.7" x2="111" y2="129.7" stroke="#000" stroke-width="2"/><line x1="24.8" y1="35.2" x2="24.8" y2="130.7" stroke="#000" stroke-width="2"/><line x1="42" y1="35.2" x2="42" y2="130.7" stroke="#000" stroke-width="1.8"/><line x1="59.3" y1="35.2" x2="59.3" y2="130.7" stroke="#000" stroke-width="1.8"/><line x1="76.5" y1="35.2" x2="76.5" y2="130.7" stroke="#000" stroke-width="1.8"/><line x1="93.8" y1="35.2" x2="93.8" y2="130.7" stroke="#000" stroke-width="1.8"/><line x1="111" y1="35.2" x2="111" y2="130.7" stroke="#000" stroke-width="2"/><rect x="24.3" y="35.2" width="7" height="95.5" fill="#000"/><rect x="26" y="28.9" width="15.6" height="108.1" rx="7.8" fill="#000"/><circle cx="67.9" cy="73.6" r="7.3" fill="#000"/><circle cx="67.9" cy="92.3" r="7.3" fill="#000"/></g><text x="44.3" y="143.8" class="cf">8</text></g>
<g transform="translate(383.7,472.4)"><rect width="135.2" height="147.2" fill="#9a9a9a"/><rect x="29.8" y="41.2" width="86.2" height="93.5" fill="#000" opacity="0.3" filter="url(#rsh)"/><text x="67.6" y="25.7" class="ct">C7/4</text><g filter="url(#gsh)"><line x1="24.8" y1="36.2" x2="111" y2="36.2" stroke="#000" stroke-width="2"/><line x1="24.8" y1="54.9" x2="111" y2="54.9" stroke="#000" stroke-width="1.35"/><line x1="24.8" y1="73.6" x2="111" y2="73.6" stroke="#000" stroke-width="1.35"/><line x1="24.8" y1="92.3" x2="111" y2="92.3" stroke="#000" stroke-width="1.35"/><line x1="24.8" y1="111" x2="111" y2="111" stroke="#000" stroke-width="1.35"/><line x1="24.8" y1="129.7" x2="111" y2="129.7" stroke="#000" stroke-width="2"/><line x1="24.8" y1="35.2" x2="24.8" y2="130.7" stroke="#000" stroke-width="2"/><line x1="42" y1="35.2" x2="42" y2="130.7" stroke="#000" stroke-width="1.8"/><line x1="59.3" y1="35.2" x2="59.3" y2="130.7" stroke="#000" stroke-width="1.8"/><line x1="76.5" y1="35.2" x2="76.5" y2="130.7" stroke="#000" stroke-width="1.8"/><line x1="93.8" y1="35.2" x2="93.8" y2="130.7" stroke="#000" stroke-width="1.8"/><line x1="111" y1="35.2" x2="111" y2="130.7" stroke="#000" stroke-width="2"/><rect x="24.3" y="35.2" width="7" height="95.5" fill="#000"/><rect x="26" y="28.9" width="15.6" height="108.1" rx="7.8" fill="#000"/><circle cx="85.1" cy="54.9" r="7.3" fill="#000"/></g><text x="44.3" y="143.8" class="cf">3</text></g>
<g transform="translate(535.7,472.4)"><rect width="135.2" height="147.2" fill="#9a9a9a"/><rect x="29.8" y="41.2" width="86.2" height="93.5" fill="#000" opacity="0.3" filter="url(#rsh)"/><text x="67.6" y="25.7" class="ct">C7/4</text><g filter="url(#gsh)"><line x1="24.8" y1="36.2" x2="111" y2="36.2" stroke="#000" stroke-width="2"/><line x1="24.8" y1="54.9" x2="111" y2="54.9" stroke="#000" stroke-width="1.35"/><line x1="24.8" y1="73.6" x2="111" y2="73.6" stroke="#000" stroke-width="1.35"/><line x1="24.8" y1="92.3" x2="111" y2="92.3" stroke="#000" stroke-width="1.35"/><line x1="24.8" y1="111" x2="111" y2="111" stroke="#000" stroke-width="1.35"/><line x1="24.8" y1="129.7" x2="111" y2="129.7" stroke="#000" stroke-width="2"/><line x1="24.8" y1="35.2" x2="24.8" y2="130.7" stroke="#000" stroke-width="2"/><line x1="42" y1="35.2" x2="42" y2="130.7" stroke="#000" stroke-width="1.8"/><line x1="59.3" y1="35.2" x2="59.3" y2="130.7" stroke="#000" stroke-width="1.8"/><line x1="76.5" y1="35.2" x2="76.5" y2="130.7" stroke="#000" stroke-width="1.8"/><line x1="93.8" y1="35.2" x2="93.8" y2="130.7" stroke="#000" stroke-width="1.8"/><line x1="111" y1="35.2" x2="111" y2="130.7" stroke="#000" stroke-width="2"/><rect x="24.3" y="35.2" width="7" height="95.5" fill="#000"/><rect x="26" y="28.9" width="15.6" height="108.1" rx="7.8" fill="#000"/><circle cx="67.9" cy="73.6" r="7.3" fill="#000"/><circle cx="67.9" cy="111" r="7.3" fill="#000"/></g><text x="44.3" y="143.8" class="cf">8</text></g>
<g transform="translate(1447.7,472.4)"><rect width="135.2" height="147.2" fill="#9a9a9a"/><rect x="29.8" y="41.2" width="86.2" height="93.5" fill="#000" opacity="0.3" filter="url(#rsh)"/><text x="67.6" y="25.7" class="ct">Cmaj7</text><g filter="url(#gsh)"><line x1="24.8" y1="36.2" x2="111" y2="36.2" stroke="#000" stroke-width="2"/><line x1="24.8" y1="54.9" x2="111" y2="54.9" stroke="#000" stroke-width="1.35"/><line x1="24.8" y1="73.6" x2="111" y2="73.6" stroke="#000" stroke-width="1.35"/><line x1="24.8" y1="92.3" x2="111" y2="92.3" stroke="#000" stroke-width="1.35"/><line x1="24.8" y1="111" x2="111" y2="111" stroke="#000" stroke-width="1.35"/><line x1="24.8" y1="129.7" x2="111" y2="129.7" stroke="#000" stroke-width="2"/><line x1="24.8" y1="35.2" x2="24.8" y2="130.7" stroke="#000" stroke-width="2"/><line x1="42" y1="35.2" x2="42" y2="130.7" stroke="#000" stroke-width="1.8"/><line x1="59.3" y1="35.2" x2="59.3" y2="130.7" stroke="#000" stroke-width="1.8"/><line x1="76.5" y1="35.2" x2="76.5" y2="130.7" stroke="#000" stroke-width="1.8"/><line x1="93.8" y1="35.2" x2="93.8" y2="130.7" stroke="#000" stroke-width="1.8"/><line x1="111" y1="35.2" x2="111" y2="130.7" stroke="#000" stroke-width="2"/><rect x="17.1" y="35.2" width="7.7" height="95.5" fill="#000"/><rect x="26" y="28.9" width="15.6" height="52" rx="7.8" fill="#000"/><circle cx="67.9" cy="92.3" r="7.3" fill="#000"/><circle cx="85.1" cy="111" r="7.3" fill="#000"/></g><path d="M10.5 125.2 L17.1 134.2 M17.1 125.2 L10.5 134.2" stroke="#000" stroke-width="2.3"/></g>
<g transform="translate(1599.7,472.4)"><rect width="135.2" height="147.2" fill="#9a9a9a"/><rect x="29.8" y="41.2" width="86.2" height="93.5" fill="#000" opacity="0.3" filter="url(#rsh)"/><text x="67.6" y="25.7" class="ct">Cmaj7</text><g filter="url(#gsh)"><line x1="24.8" y1="36.2" x2="111" y2="36.2" stroke="#000" stroke-width="2"/><line x1="24.8" y1="54.9" x2="111" y2="54.9" stroke="#000" stroke-width="1.35"/><line x1="24.8" y1="73.6" x2="111" y2="73.6" stroke="#000" stroke-width="1.35"/><line x1="24.8" y1="92.3" x2="111" y2="92.3" stroke="#000" stroke-width="1.35"/><line x1="24.8" y1="111" x2="111" y2="111" stroke="#000" stroke-width="1.35"/><line x1="24.8" y1="129.7" x2="111" y2="129.7" stroke="#000" stroke-width="2"/><line x1="24.8" y1="35.2" x2="24.8" y2="130.7" stroke="#000" stroke-width="2"/><line x1="42" y1="35.2" x2="42" y2="130.7" stroke="#000" stroke-width="1.8"/><line x1="59.3" y1="35.2" x2="59.3" y2="130.7" stroke="#000" stroke-width="1.8"/><line x1="76.5" y1="35.2" x2="76.5" y2="130.7" stroke="#000" stroke-width="1.8"/><line x1="93.8" y1="35.2" x2="93.8" y2="130.7" stroke="#000" stroke-width="1.8"/><line x1="111" y1="35.2" x2="111" y2="130.7" stroke="#000" stroke-width="2"/><circle cx="67.9" cy="36.2" r="7.3" fill="#000"/><circle cx="33.4" cy="54.9" r="7.3" fill="#000"/><circle cx="33.4" cy="73.6" r="7.3" fill="#000"/></g><path d="M10.5 87.8 L17.1 96.8 M17.1 87.8 L10.5 96.8" stroke="#000" stroke-width="2.3"/><path d="M10.5 106.5 L17.1 115.5 M17.1 106.5 L10.5 115.5" stroke="#000" stroke-width="2.3"/><path d="M10.5 125.2 L17.1 134.2 M17.1 125.2 L10.5 134.2" stroke="#000" stroke-width="2.3"/><text x="44.3" y="143.8" class="cf">6</text></g>
</svg>

<!-- status bar content -->
<svg class="a" style="left:0;top:0" width="2048" height="47">
<path d="M38.5 24 L51.5 16.8 L51.5 31.2 Z" fill="#fff"/>
<text x="60" y="31.8" textLength="96.5" lengthAdjust="spacing" fill="#fff" font-size="21" font-family="Liberation Sans" stroke="#fff" stroke-width="0.5">TestFlight</text>
<text x="173" y="31.8" textLength="57.5" lengthAdjust="spacing" fill="#fff" font-size="21" font-family="Liberation Sans" stroke="#fff" stroke-width="0.5">23:58</text>
<text x="247" y="31.8" textLength="165" lengthAdjust="spacing" fill="#fff" font-size="21" font-family="Liberation Sans" stroke="#fff" stroke-width="0.5">Dienstag 3. März</text>
<text x="1864" y="31.8" textLength="97.5" lengthAdjust="spacing" fill="#fff" font-size="21" font-family="Liberation Sans" stroke="#fff" stroke-width="0.5">Lädt nicht</text>
<!-- wifi -->
<g fill="none" stroke="#fff" stroke-width="3" stroke-linecap="round">
<path d="M1836.5 21 A16 16 0 0 1 1856.5 21"/>
<path d="M1840 25 A10.5 10.5 0 0 1 1853 25"/>
</g>
<path d="M1843 28.5 L1846.5 32 L1850 28.5 A5 5 0 0 0 1843 28.5 Z" fill="#fff"/>
<rect x="1969.5" y="14.5" width="37" height="19" rx="6" fill="none" stroke="#777" stroke-width="1.6"/>
<rect x="1972" y="17" width="21" height="14" rx="4" fill="#fff"/>
<path d="M2008.5 20.5 A4 4 0 0 1 2008.5 27.5 Z" fill="#777"/>
</svg>

<!-- toolbar content -->
<div class="a" style="left:8px;top:76.5px;color:#a39679;font-size:30px;line-height:36px;white-space:nowrap;letter-spacing:0.15px;">Chords (254)</div>
<div class="tb" style="left:230px;">Add</div>
<div class="tb" style="left:423px;">Edit</div>
<div class="tb" style="left:617px;">Delete</div>

<!-- bottom zoom bar -->
<div class="a" style="left:231px;top:1458px;color:#a8a8a8;font-size:32px;line-height:40px;letter-spacing:1.2px;">Zoom</div>
<div class="a" style="left:357px;top:1474px;width:1513px;height:5px;border-radius:2.5px;background:#282828;"></div>
<div class="a" style="left:909px;top:1461px;width:30px;height:30px;border-radius:50%;background:#a39679;"></div>
<svg class="a" style="left:1900px;top:1440px" width="148" height="96">
<circle cx="36" cy="36" r="15.2" fill="none" stroke="#9a9a9a" stroke-width="2.6"/>
<path d="M30.5 31.5 A5.8 5.8 0 1 1 38.5 36.5 Q36 38 36 41" fill="none" stroke="#9a9a9a" stroke-width="2.6"/>
<rect x="34.3" y="43.3" width="3.4" height="3.4" fill="#9a9a9a"/>
<g transform="translate(111,36.5)" fill="none" stroke="#9c9c9c" stroke-width="3.6">
<circle r="5.5" stroke-width="3.6"/>
<path d="M-3.51 -11.48 L-2.69 -16.08 L2.69 -16.08 L3.51 -11.48 L8.18 -8.78 L12.58 -10.37 L15.27 -5.71 L11.69 -2.70 L11.69 2.70 L15.27 5.71 L12.58 10.37 L8.18 8.78 L3.51 11.48 L2.69 16.08 L-2.69 16.08 L-3.51 11.48 L-8.18 8.78 L-12.58 10.37 L-15.27 5.71 L-11.69 2.70 L-11.69 -2.70 L-15.27 -5.71 L-12.58 -10.37 L-8.18 -8.78 Z" stroke-linejoin="miter"/>
</g>
<path d="M138.8 56.6 A33 33 0 0 1 108.6 86.8" fill="none" stroke="#fff" stroke-width="4.2" stroke-linecap="round"/>
</svg>

<!-- screen corners -->
<svg class="a" style="left:0;top:0" width="2048" height="1536">
<path d="M0 0 L6 0 Q2.5 2 0 5 Z" fill="#fff"/>
<path d="M2048 0 L2041 0 Q2045 2 2048 6 Z" fill="#fff"/>
<path d="M0 1536 L0 1531 Q2 1534 4 1536 Z" fill="#fff"/>
<path d="M2048 1536 L2048 1530 Q2046 1533 2043 1536 Z" fill="#fff"/>
</svg>

<!-- modal -->
<div class="a" style="left:600px;top:396px;width:848px;height:744px;border-radius:58px;background:#404040;box-shadow:0 0 35px 12px rgba(0,4,0,0.3), 0 0 150px 50px rgba(0,4,0,0.22);overflow:hidden;">
</div>
<div class="a" style="left:600px;top:396px;width:848px;height:744px;border-radius:58px;overflow:hidden;">
<div class="a" style="left:-600px;top:-396px;width:2048px;height:1536px;">
  <div class="lab" style="left:859px;top:419px;font-size:31px;text-decoration:underline;text-decoration-thickness:2px;text-underline-offset:1px;">Chord</div>
  <div class="lab" style="left:609px;top:493px;">Name</div>
  <div class="a" style="left:748px;top:475px;width:433px;height:65.5px;background:#fff;"></div>
  <div class="a" style="left:750px;top:493px;color:#000;font-size:30px;line-height:1;">C</div>
  <div class="lab" style="left:608px;top:567px;letter-spacing:0.35px;">StartBar</div>
  <div class="lab" style="left:608px;top:641px;letter-spacing:0.5px;">BarCount:</div>
  <svg class="a" style="left:740px;top:550px" width="460" height="160">
    <line x1="38" y1="30.5" x2="425" y2="30.5" stroke="#5e5e5e" stroke-width="6" stroke-linecap="round"/>
<line x1="38" y1="34" x2="38" y2="45.5" stroke="#8b8b8b" stroke-width="2"/>
<text x="38" y="72.5" font-size="19.5" text-anchor="middle" fill="#f4f4f4" font-family="Liberation Sans">0</text>
<line x1="63.8" y1="34" x2="63.8" y2="45.5" stroke="#8b8b8b" stroke-width="2"/>
<text x="63.8" y="72.5" font-size="19.5" text-anchor="middle" fill="#8f8f8f" font-family="Liberation Sans">1</text>
<line x1="89.6" y1="34" x2="89.6" y2="45.5" stroke="#8b8b8b" stroke-width="2"/>
<text x="89.6" y="72.5" font-size="19.5" text-anchor="middle" fill="#8f8f8f" font-family="Liberation Sans">2</text>
<line x1="115.4" y1="34" x2="115.4" y2="45.5" stroke="#8b8b8b" stroke-width="2"/>
<text x="115.4" y="72.5" font-size="19.5" text-anchor="middle" fill="#8f8f8f" font-family="Liberation Sans">3</text>
<line x1="141.2" y1="34" x2="141.2" y2="45.5" stroke="#8b8b8b" stroke-width="2"/>
<text x="141.2" y="72.5" font-size="19.5" text-anchor="middle" fill="#8f8f8f" font-family="Liberation Sans">4</text>
<line x1="167" y1="34" x2="167" y2="45.5" stroke="#8b8b8b" stroke-width="2"/>
<text x="167" y="72.5" font-size="19.5" text-anchor="middle" fill="#8f8f8f" font-family="Liberation Sans">5</text>
<line x1="192.8" y1="34" x2="192.8" y2="45.5" stroke="#8b8b8b" stroke-width="2"/>
<text x="192.8" y="72.5" font-size="19.5" text-anchor="middle" fill="#8f8f8f" font-family="Liberation Sans">6</text>
<line x1="218.6" y1="34" x2="218.6" y2="45.5" stroke="#8b8b8b" stroke-width="2"/>
<text x="218.6" y="72.5" font-size="19.5" text-anchor="middle" fill="#8f8f8f" font-family="Liberation Sans">7</text>
<line x1="244.4" y1="34" x2="244.4" y2="45.5" stroke="#8b8b8b" stroke-width="2"/>
<text x="244.4" y="72.5" font-size="19.5" text-anchor="middle" fill="#8f8f8f" font-family="Liberation Sans">8</text>
<line x1="270.2" y1="34" x2="270.2" y2="45.5" stroke="#8b8b8b" stroke-width="2"/>
<text x="270.2" y="72.5" font-size="19.5" text-anchor="middle" fill="#8f8f8f" font-family="Liberation Sans">9</text>
<line x1="296" y1="34" x2="296" y2="45.5" stroke="#8b8b8b" stroke-width="2"/>
<text x="296" y="72.5" font-size="19.5" text-anchor="middle" fill="#8f8f8f" font-family="Liberation Sans">10</text>
<line x1="321.8" y1="34" x2="321.8" y2="45.5" stroke="#8b8b8b" stroke-width="2"/>
<text x="321.8" y="72.5" font-size="19.5" text-anchor="middle" fill="#8f8f8f" font-family="Liberation Sans">11</text>
<line x1="347.6" y1="34" x2="347.6" y2="45.5" stroke="#8b8b8b" stroke-width="2"/>
<text x="347.6" y="72.5" font-size="19.5" text-anchor="middle" fill="#8f8f8f" font-family="Liberation Sans">12</text>
<line x1="373.4" y1="34" x2="373.4" y2="45.5" stroke="#8b8b8b" stroke-width="2"/>
<text x="373.4" y="72.5" font-size="19.5" text-anchor="middle" fill="#8f8f8f" font-family="Liberation Sans">13</text>
<line x1="399.2" y1="34" x2="399.2" y2="45.5" stroke="#8b8b8b" stroke-width="2"/>
<text x="399.2" y="72.5" font-size="19.5" text-anchor="middle" fill="#8f8f8f" font-family="Liberation Sans">14</text>
<line x1="425" y1="34" x2="425" y2="45.5" stroke="#8b8b8b" stroke-width="2"/>
<text x="425" y="72.5" font-size="19.5" text-anchor="middle" fill="#8f8f8f" font-family="Liberation Sans">15</text>
<circle cx="38.200000000000045" cy="30.399999999999977" r="15" fill="#f0dfb3"/>
<line x1="296" y1="105" x2="425" y2="105" stroke="#5e5e5e" stroke-width="6" stroke-linecap="round"/>
<line x1="38" y1="105" x2="296" y2="105" stroke="#1f1f1f" stroke-width="6" stroke-linecap="round"/>
<line x1="38" y1="108" x2="38" y2="119" stroke="#8b8b8b" stroke-width="2"/>
<text x="38" y="147.29999999999995" font-size="19.5" text-anchor="middle" fill="#f4f4f4" font-family="Liberation Sans">3</text>
<line x1="167" y1="108" x2="167" y2="119" stroke="#8b8b8b" stroke-width="2"/>
<text x="167" y="147.29999999999995" font-size="19.5" text-anchor="middle" fill="#f4f4f4" font-family="Liberation Sans">4</text>
<line x1="296" y1="108" x2="296" y2="119" stroke="#8b8b8b" stroke-width="2"/>
<text x="296" y="147.29999999999995" font-size="19.5" text-anchor="middle" fill="#f4f4f4" font-family="Liberation Sans">5</text>
<line x1="425" y1="108" x2="425" y2="119" stroke="#8b8b8b" stroke-width="2"/>
<text x="425" y="147.29999999999995" font-size="19.5" text-anchor="middle" fill="#8f8f8f" font-family="Liberation Sans">6</text>
<circle cx="296" cy="105" r="15" fill="#f0dfb3"/>
  </svg>
  <div class="a" style="left:1196px;top:411px;width:3px;height:625px;background:#8c8c8c;"></div>
  <div class="btn" style="left:1217.5px;top:484.5px;width:223px;height:46px;"></div>
  <div class="lab" style="left:1260px;top:567px;letter-spacing:0.35px;">Transpose</div>
  <div class="btn" style="left:1217.5px;top:633.5px;width:223px;height:45.5px;"></div>
  <svg class="a" style="left:1300px;top:490px" width="60" height="190">
    <path d="M28 26 L28 8 M22 14 L28 8 L34 14" fill="none" stroke="#000" stroke-width="2"/>
    <path d="M28 156 L28 174 M22 168 L28 174 L34 168" fill="none" stroke="#8a8a8a" stroke-width="2"/>
  </svg>
  <!-- preview -->
  <div class="a" style="left:712px;top:731px;width:371px;height:296px;background:#f4f4f4;"></div>
  <svg class="a" style="left:712px;top:731px" width="371" height="296">
<defs><filter id="psh" x="-30%" y="-30%" width="160%" height="160%"><feGaussianBlur stdDeviation="9"/></filter><filter id="dsh" x="-50%" y="-50%" width="200%" height="200%"><feGaussianBlur stdDeviation="4"/></filter><linearGradient id="pg" x1="0" y1="0" x2="0" y2="1"><stop offset="0" stop-color="#e6e6e6"/><stop offset="1" stop-color="#c4c4c4"/></linearGradient></defs>
<rect x="60" y="74" width="254" height="200" fill="#000" opacity="0.38" filter="url(#psh)"/>
<rect x="70" y="74" width="232" height="186" fill="url(#pg)"/>
<text x="185" y="51.799999999999955" font-size="50" text-anchor="middle" fill="#000" font-family="Liberation Sans">C</text>
<line x1="70" y1="74" x2="303" y2="74" stroke="#000" stroke-width="2.4"/>
<line x1="70" y1="111.2" x2="303" y2="111.2" stroke="#000" stroke-width="1.7"/>
<line x1="70" y1="148.4" x2="303" y2="148.4" stroke="#000" stroke-width="1.7"/>
<line x1="70" y1="185.6" x2="303" y2="185.6" stroke="#000" stroke-width="1.7"/>
<line x1="70" y1="222.8" x2="303" y2="222.8" stroke="#000" stroke-width="1.7"/>
<line x1="70" y1="260" x2="303" y2="260" stroke="#000" stroke-width="2.4"/>
<line x1="70" y1="73" x2="70" y2="261" stroke="#000" stroke-width="2.6"/>
<line x1="115.9" y1="73" x2="115.9" y2="261" stroke="#000" stroke-width="2.6"/>
<line x1="162.6" y1="73" x2="162.6" y2="261" stroke="#000" stroke-width="2.6"/>
<line x1="208.5" y1="73" x2="208.5" y2="261" stroke="#000" stroke-width="2.6"/>
<line x1="255.2" y1="73" x2="255.2" y2="261" stroke="#000" stroke-width="2.6"/>
<line x1="302" y1="73" x2="302" y2="261" stroke="#000" stroke-width="2.6"/>
<rect x="52.200000000000045" y="73" width="17.8" height="188" fill="#000"/>
<circle cx="96" cy="116.2" r="15" fill="#000" opacity="0.3" filter="url(#dsh)"/>
<circle cx="93" cy="111.2" r="15" fill="#000"/>
<circle cx="142.2" cy="153.4" r="15" fill="#000" opacity="0.3" filter="url(#dsh)"/>
<circle cx="139.2" cy="148.4" r="15" fill="#000"/>
<circle cx="188.5" cy="227.8" r="15" fill="#000" opacity="0.3" filter="url(#dsh)"/>
<circle cx="185.5" cy="222.8" r="15" fill="#000"/>
</svg>
  <div class="btn" style="left:615px;top:1078px;width:125.5px;height:49.5px;line-height:50px;letter-spacing:0.3px;">New</div>
  <div class="btn" style="left:764px;top:1078px;width:423px;height:49.5px;line-height:50px;letter-spacing:0.3px;">Update</div>
  <div class="btn" style="left:1217.5px;top:1078px;width:222.5px;height:49.5px;line-height:50px;letter-spacing:0.3px;">Exit</div>
</div></div>
</body></html>
